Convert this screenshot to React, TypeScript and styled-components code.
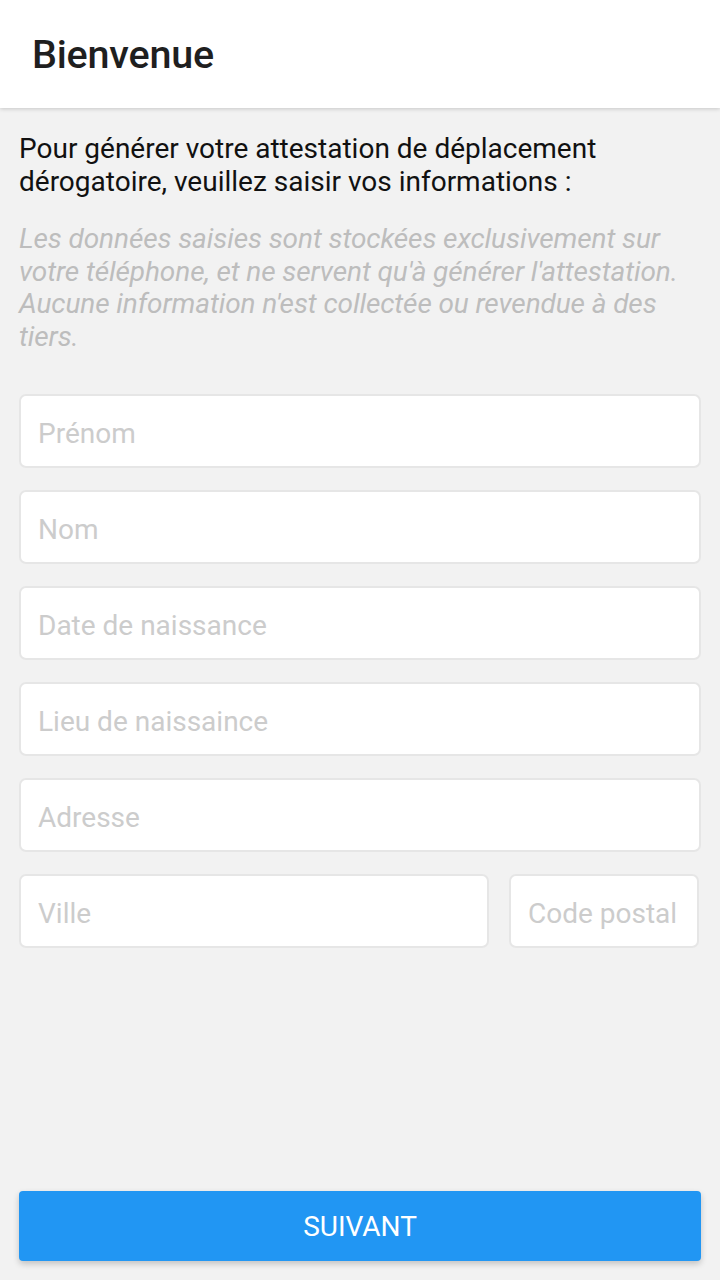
import React from "react";
import styled, { createGlobalStyle } from "styled-components";

const Global = createGlobalStyle`
  html, body { margin: 0; padding: 0; background: #f2f2f2; }
  body { font-family: Roboto, "Noto Sans", sans-serif; }
  * { box-sizing: border-box; }
`;

const Screen = styled.div`
  width: 720px;
  height: 1280px;
  display: flex;
  flex-direction: column;
  background: #f2f2f2;
  overflow: hidden;
`;

const Header = styled.header`
  height: 108px;
  flex: none;
  background: #ffffff;
  display: flex;
  align-items: center;
  padding-left: 32px;
  box-shadow: 0 1px 4px rgba(0, 0, 0, 0.18);
  position: relative;
  z-index: 1;
`;

const Title = styled.h1`
  margin: 0;
  font-size: 39.5px;
  font-weight: 500;
  color: #1f1f1f;
  letter-spacing: -0.2px;
`;

const Body = styled.main`
  flex: 1;
  display: flex;
  flex-direction: column;
  padding: 24px 19px 19px 19px;
`;

const Intro = styled.p`
  margin: 0;
  font-size: 28px;
  line-height: 33px;
  color: #111111;
`;

const Note = styled.p`
  margin: 25px 0 0 0;
  font-size: 28px;
  line-height: 32.7px;
  font-style: italic;
  color: #bdbdbd;
  letter-spacing: -0.1px;
`;

const Form = styled.div`
  margin-top: 40px;
  display: flex;
  flex-direction: column;
  gap: 22px;
`;

const Row = styled.div`
  display: flex;
  gap: 20px;
  padding-right: 2px;
`;

const Field = styled.input<{ $width?: number; $grow?: boolean }>`
  display: block;
  height: 74px;
  width: ${(p) => (p.$width ? `${p.$width}px` : "100%")};
  flex: ${(p) => (p.$grow ? "1 1 0" : "none")};
  min-width: 0;
  background: #ffffff;
  border: 2px solid #e6e6e6;
  border-radius: 7px;
  padding: 5px 17px 0 17px;
  font-family: Roboto, "Noto Sans", sans-serif;
  font-size: 28px;
  color: #222;
  outline: none;
  &::placeholder {
    color: #cccccc;
  }
`;

const Spacer = styled.div`
  flex: 1;
`;

const Button = styled.button`
  flex: none;
  height: 70px;
  width: 100%;
  background: #2196f3;
  border: none;
  border-radius: 4px;
  color: #ffffff;
  font-family: Roboto, "Noto Sans", sans-serif;
  font-size: 28px;
  box-shadow: 0 3px 6px rgba(0, 0, 0, 0.2);
`;

export default function App() {
  return (
    <>
      <Global />
      <Screen>
        <Header>
          <Title>Bienvenue</Title>
        </Header>
        <Body>
          <Intro>
            Pour générer votre attestation de déplacement dérogatoire, veuillez saisir vos informations :
          </Intro>
          <Note>
            Les données saisies sont stockées exclusivement sur votre téléphone, et ne servent qu'à générer
            l'attestation. Aucune information n'est collectée ou revendue à des tiers.
          </Note>
          <Form>
            <Field placeholder="Prénom" />
            <Field placeholder="Nom" />
            <Field placeholder="Date de naissance" />
            <Field placeholder="Lieu de naissaince" />
            <Field placeholder="Adresse" />
            <Row>
              <Field placeholder="Ville" $grow />
              <Field placeholder="Code postal" $width={190} />
            </Row>
          </Form>
          <Spacer />
          <Button>SUIVANT</Button>
        </Body>
      </Screen>
    </>
  );
}
